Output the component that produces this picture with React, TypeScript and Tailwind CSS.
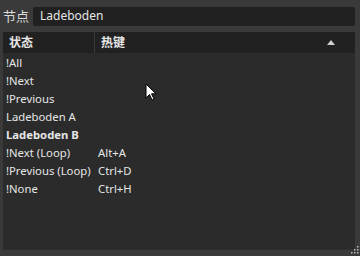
import React from "react";

const rows = [
  { name: "!All", key: "" },
  { name: "!Next", key: "" },
  { name: "!Previous", key: "" },
  { name: "Ladeboden A", key: "" },
  { name: "Ladeboden B", key: "", bold: true },
  { name: "!Next (Loop)", key: "Alt+A" },
  { name: "!Previous (Loop)", key: "Ctrl+D" },
  { name: "!None", key: "Ctrl+H" },
];

export default function App() {
  return (
    <div
      className="relative w-[360px] h-[256px] bg-[#3a3a3a] text-[#e6e6e6] overflow-hidden flex flex-col"
      style={{ fontFamily: '"Noto Sans", "Noto Sans CJK SC", sans-serif' }}
    >
      {/* node row */}
      <div className="flex items-center h-[32px] pl-[3px] pr-[5px] gap-[4px]">
        <span className="text-[13px] leading-none text-[#dcdcdc]">节点</span>
        <div className="flex-1 h-[19px] bg-[#212121] rounded-[2px] flex items-center px-[7px] text-[12px]">
          Ladeboden
        </div>
      </div>

      {/* table */}
      <div className="mx-[3px] mr-[5px] h-[218px] bg-[#2b2b2b] flex flex-col border-b border-[#2f2f2f]">
        <div className="flex h-[21px] bg-[#212121] text-[12px] font-bold items-center">
          <div className="w-[92px] h-full flex items-center pl-[6px] border-r border-[#3a3a3a]">状态</div>
          <div className="flex-1 h-full flex items-center pl-[6px]">热键</div>
          <svg width="8" height="5" viewBox="0 0 8 5" className="mr-[20px] mb-[1px]">
            <polygon points="4,0 8,5 0,5" fill="#cfcfcf" />
          </svg>
        </div>
        <div className="flex flex-col pt-[1px] text-[11.3px]">
          {rows.map((r) => (
            <div key={r.name} className="flex h-[18px] items-center">
              <div className={"w-[95px] pl-[3px] whitespace-nowrap " + (r.bold ? "font-bold" : "")}>{r.name}</div>
              <div>{r.key}</div>
            </div>
          ))}
        </div>
      </div>

      {/* resize grip */}
      <svg width="10" height="10" viewBox="0 0 10 10" className="absolute right-[1px] bottom-[2px]">
        {[
          [8, 0], [8, 3], [5, 3], [8, 6], [5, 6], [2, 6],
        ].map(([x, y]) => (
          <rect key={x + "-" + y} x={x} y={y + 2} width="1.5" height="1.5" fill="#bdbdbd" />
        ))}
      </svg>

      {/* mouse cursor */}
      <svg width="12" height="19" viewBox="0 0 12 19" className="absolute left-[145px] top-[83px]">
        <path d="M1 1 L1 15 L4.5 11.5 L7 17 L9 16 L6.5 10.8 L11 10.8 Z" fill="#ffffff" stroke="#000000" strokeWidth="1" />
      </svg>
    </div>
  );
}
